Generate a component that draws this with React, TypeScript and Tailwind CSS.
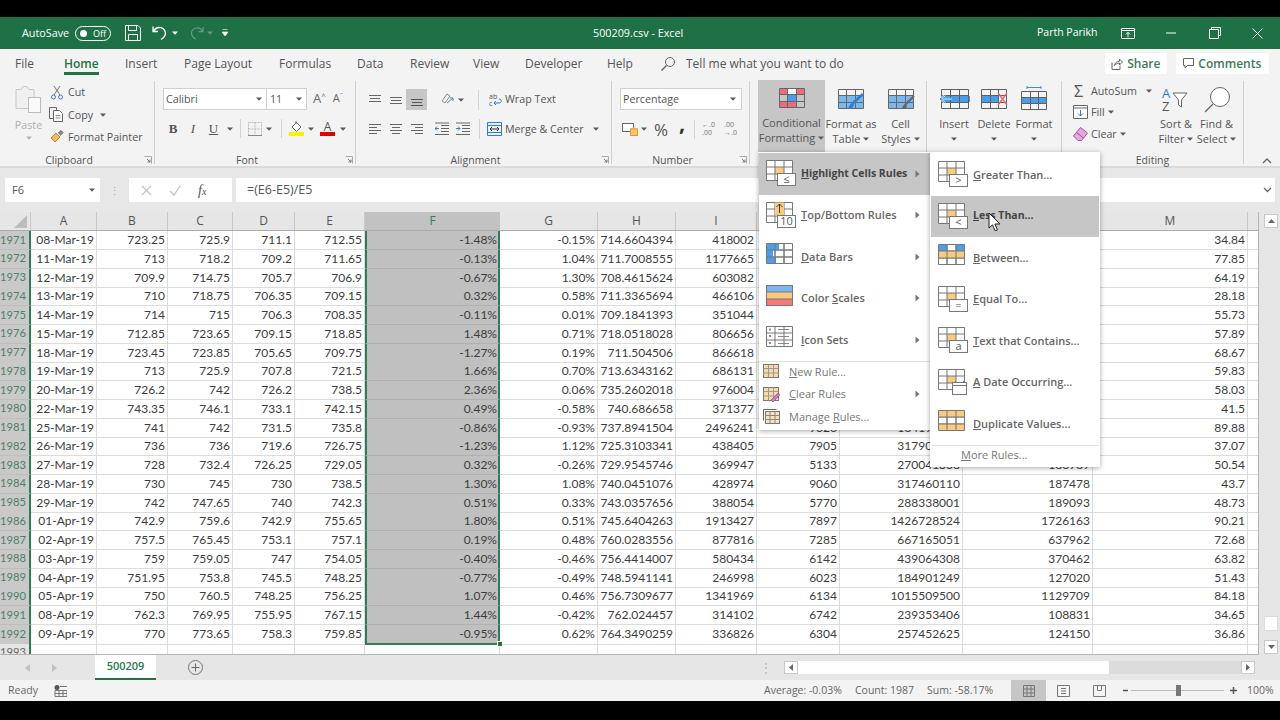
import React from 'react';

const rows: string[][] = [
  ['1971', '08-Mar-19', '723.25', '725.9', '711.1', '712.55', '-1.48%', '-0.15%', '714.6604394', '418002', '', '', '', '34.84'],
  ['1972', '11-Mar-19', '713', '718.2', '709.2', '711.65', '-0.13%', '1.04%', '711.7008555', '1177665', '', '', '', '77.85'],
  ['1973', '12-Mar-19', '709.9', '714.75', '705.7', '706.9', '-0.67%', '1.30%', '708.4615624', '603082', '', '', '', '64.19'],
  ['1974', '13-Mar-19', '710', '718.75', '706.35', '709.15', '0.32%', '0.58%', '711.3365694', '466106', '', '', '', '28.18'],
  ['1975', '14-Mar-19', '714', '715', '706.3', '708.35', '-0.11%', '0.01%', '709.1841393', '351044', '', '', '', '55.73'],
  ['1976', '15-Mar-19', '712.85', '723.65', '709.15', '718.85', '1.48%', '0.71%', '718.0518028', '806656', '', '', '', '57.89'],
  ['1977', '18-Mar-19', '723.45', '723.85', '705.65', '709.75', '-1.27%', '0.19%', '711.504506', '866618', '', '', '', '68.67'],
  ['1978', '19-Mar-19', '713', '725.9', '707.8', '721.5', '1.66%', '0.70%', '713.6343162', '686131', '', '', '', '59.83'],
  ['1979', '20-Mar-19', '726.2', '742', '726.2', '738.5', '2.36%', '0.06%', '735.2602018', '976004', '', '', '', '58.03'],
  ['1980', '22-Mar-19', '743.35', '746.1', '733.1', '742.15', '0.49%', '-0.58%', '740.686658', '371377', '', '', '', '41.5'],
  ['1981', '25-Mar-19', '741', '742', '731.5', '735.8', '-0.86%', '-0.93%', '737.8941504', '2496241', '9026', '184194500', '', '89.88'],
  ['1982', '26-Mar-19', '736', '736', '719.6', '726.75', '-1.23%', '1.12%', '725.3103341', '438405', '7905', '317900000', '', '37.07'],
  ['1983', '27-Mar-19', '728', '732.4', '726.25', '729.05', '0.32%', '-0.26%', '729.9545746', '369947', '5133', '270041308', '186989', '50.54'],
  ['1984', '28-Mar-19', '730', '745', '730', '738.5', '1.30%', '1.08%', '740.0451076', '428974', '9060', '317460110', '187478', '43.7'],
  ['1985', '29-Mar-19', '742', '747.65', '740', '742.3', '0.51%', '0.33%', '743.0357656', '388054', '5770', '288338001', '189093', '48.73'],
  ['1986', '01-Apr-19', '742.9', '759.6', '742.9', '755.65', '1.80%', '0.51%', '745.6404263', '1913427', '7897', '1426728524', '1726163', '90.21'],
  ['1987', '02-Apr-19', '757.5', '765.45', '753.1', '757.1', '0.19%', '0.48%', '760.0283556', '877816', '7285', '667165051', '637962', '72.68'],
  ['1988', '03-Apr-19', '759', '759.05', '747', '754.05', '-0.40%', '-0.46%', '756.4414007', '580434', '6142', '439064308', '370462', '63.82'],
  ['1989', '04-Apr-19', '751.95', '753.8', '745.5', '748.25', '-0.77%', '-0.49%', '748.5941141', '246998', '6023', '184901249', '127020', '51.43'],
  ['1990', '05-Apr-19', '750', '760.5', '748.25', '756.25', '1.07%', '0.46%', '756.7309677', '1341969', '6134', '1015509500', '1129709', '84.18'],
  ['1991', '08-Apr-19', '762.3', '769.95', '755.95', '767.15', '1.44%', '-0.42%', '762.024457', '314102', '6742', '239353406', '108831', '34.65'],
  ['1992', '09-Apr-19', '770', '773.65', '758.3', '759.85', '-0.95%', '0.62%', '764.3490259', '336826', '6304', '257452625', '124150', '36.86'],
];

const gridCols = 'grid grid-cols-[31px_66px_71px_65px_62px_70px_135px_98px_78px_81px_83px_123px_130px_155px_11px]';

const Caret = ({ dim }: { dim?: boolean }) => (
  <svg width="6" height="4" viewBox="0 0 6 4" className="shrink-0">
    <path d="M0 0.5h6L3 3.8z" fill={dim ? '#b5b5b5' : '#5a5a5a'} />
  </svg>
);

const Launcher = () => (
  <svg width="8" height="8" viewBox="0 0 8 8" className="absolute right-[2px] top-[-1px]">
    <path d="M0.5 0.5h7v7" fill="none" stroke="#aaa" />
    <path d="M3 3l3 3M6 3.5V6H3.5" fill="none" stroke="#777" />
  </svg>
);

const Lines = ({ lines, active }: { lines: number[][]; active?: boolean }) => (
  <svg width="14" height="14" viewBox="0 0 14 14">
    {lines.map((l, i) => (
      <path key={i} d={`M${l[0]} ${l[2]}.5H${l[1]}`} stroke={active ? '#555' : '#666'} strokeWidth="1" />
    ))}
  </svg>
);

// little grid used by ribbon buttons
const BigTable = ({ children, w = 28, h = 24 }: { children?: React.ReactNode; w?: number; h?: number }) => (
  <svg width={w} height={h} viewBox="0 0 28 24" className="overflow-visible">
    {children}
  </svg>
);

const TableLines = ({ y = 2 }: { y?: number }) => (
  <path
    d={`M1.5 ${y + 0.5}h25v19h-25zM1.5 ${y + 6.5}h25M1.5 ${y + 13.5}h25M9.5 ${y + 0.5}v19M18.5 ${y + 0.5}v19`}
    fill="none"
    stroke="#666"
  />
);

const RuleTable = ({ children, fill = true }: { children?: React.ReactNode; fill?: boolean }) => (
  <svg width="31" height="27" viewBox="0 0 31 27" className="shrink-0">
    <rect x="0.5" y="0.5" width="26" height="20" fill="#fff" />
    {fill && <rect x="9" y="7" width="9" height="7" fill="#f8cb80" />}
    <path d="M0.5 0.5h26v20h-26zM0.5 7h26M0.5 14h26M9 0.5v20M18 0.5v20" fill="none" stroke="#777" />
    {children}
  </svg>
);

const Badge = ({ label }: { label: string }) => (
  <>
    <rect x="11.5" y="13.5" width="18" height="12" fill="#fff" stroke="#777" />
    <text x="20.5" y="23" textAnchor="middle" fontSize="11" fill="#555" fontFamily="Open Sans, sans-serif">
      {label}
    </text>
  </>
);

const Cursor = () => (
  <svg width="13" height="20" viewBox="0 0 13 20" className="absolute left-[988px] top-[212px]">
    <path d="M1 1v15l3.5-3.2 2.6 6 2.4-1-2.6-5.8H12z" fill="#fff" stroke="#222" strokeWidth="1" />
  </svg>
);

const Tab = ({ label, className, active }: { label: string; className: string; active?: boolean }) => (
  <div className={`${className} shrink-0 relative h-full flex items-center pb-[2px] ${active ? 'text-[#1e7145] font-semibold' : ''}`}>
    <span>{label}</span>
    {active && <span className="absolute left-0 w-[35px] bottom-[5px] h-[3px] bg-[#217346]" />}
  </div>
);

const Group = ({ label, className, launcher, children }: { label: string; className: string; launcher?: boolean; children: React.ReactNode }) => (
  <div className={`${className} shrink-0 h-[83px] mt-px border-r border-[#cfcfcf] flex flex-col`}>
    <div className="flex-1 min-h-0">{children}</div>
    <div className={`relative h-[8px] top-[1px] flex items-center justify-center text-[10.5px] text-[#555] ${launcher ? 'pr-[16px]' : ''}`}>
      <span>{label}</span>
      {launcher && <Launcher />}
    </div>
  </div>
);

const BigBtn = ({ icon, l1, l2, className, active }: { icon: React.ReactNode; l1: string; l2?: string; className: string; active?: boolean }) => (
  <div className={`${className} shrink-0 flex flex-col items-center text-[11px] leading-[15px] text-[#555] ${active ? 'bg-[#c6c6c6] h-[72px] -mt-px relative z-0' : 'h-[70px]'}`}>
    <div className="h-[35px] pt-[6px] flex justify-center">{icon}</div>
    <div className="whitespace-nowrap">{l1}</div>
    <div className="h-[15px] whitespace-nowrap flex items-center gap-[3px]">
      {l2 && <span>{l2}</span>}
      <Caret />
    </div>
  </div>
);

const Vsep = ({ className }: { className: string }) => <div className={`${className} shrink-0 w-px bg-[#d4d4d4]`} />;

const MenuRow = ({
  icon, pre = '', u, post, arrow, active, small, bold, className,
}: {
  icon: React.ReactNode; pre?: string; u: string; post: string; arrow?: boolean; active?: boolean; small?: boolean; bold?: boolean; className?: string;
}) => (
  <div className={`flex items-center ${small ? 'h-[22.5px]' : 'h-[41.5px]'} ${active ? 'bg-[#c6c6c6]' : ''} ${className ?? ''}`}>
    {icon}
    <span className={`whitespace-nowrap ${bold ? 'font-bold text-[#444] text-[10.5px]' : small ? 'font-normal text-[#777] text-[11px]' : 'font-semibold text-[#666] text-[11px]'}`}>
      {pre}
      <u>{u}</u>
      {post}
    </span>
    {arrow && (
      <svg width="5" height="8" viewBox="0 0 5 8" className="absolute left-[156px]">
        <path d="M0.5 0.5L4.5 4 0.5 7.5z" fill="#777" />
      </svg>
    )}
  </div>
);

const IconSlot = ({ children }: { children: React.ReactNode }) => <div className="w-[42px] pl-[7px] flex items-center">{children}</div>;

const MiniSheet = ({ children }: { children?: React.ReactNode }) => (
  <svg width="17" height="15" viewBox="0 0 17 15" className="shrink-0">
    <rect x="0.5" y="0.5" width="15" height="13" fill="#fbd9a0" stroke="#777" />
    <path d="M0.5 4.5h15M0.5 9h15M5.5 0.5v13M10.5 0.5v13" stroke="#999" fill="none" />
    {children}
  </svg>
);

const App: React.FC = () => {
  return (
    <div className="relative w-[1280px] h-[720px] bg-black overflow-hidden font-['Open_Sans',sans-serif] text-[#555] flex flex-col">
      <div className="h-[17px] shrink-0 bg-black" />

      {/* title bar */}
      <div className="h-[32px] shrink-0 bg-[#1e7145] text-white text-[10.8px] flex items-center">
        <span className="ml-[22px] w-[53px]">AutoSave</span>
        <div className="w-[36px] h-[15px] rounded-full border border-white flex items-center justify-between pl-[4px] pr-[4px]">
          <span className="w-[7px] h-[7px] rounded-full bg-white" />
          <span className="text-[9px] leading-none">Off</span>
        </div>
        <svg width="16" height="16" viewBox="0 0 16 16" className="ml-[14px]">
          <path d="M0.5 0.5h12.5l2.5 2.5v12.5H0.5zM3.5 0.5v5h8v-5M3.5 15.5v-6h9v6" fill="none" stroke="#fff" />
        </svg>
        <svg width="16" height="16" viewBox="0 0 16 16" className="ml-[11px]">
          <path d="M1 1.5v5h5M1.3 6.5C3 3.5 6 2 9 2.7c3.5 1 5.2 4.4 4 7.5-.7 2-2.3 3.4-4 4.3" fill="none" stroke="#fff" strokeWidth="1.3" />
        </svg>
        <svg width="6" height="4" viewBox="0 0 6 4" className="ml-[4px]"><path d="M0 0.5h6L3 3.8z" fill="#fff" /></svg>
        <svg width="15" height="16" viewBox="0 0 16 16" className="ml-[11px] opacity-30">
          <path d="M15 1.5v5h-5M14.7 6.5C13 3.5 10 2 7 2.7c-3.5 1-5.2 4.4-4 7.5.7 2 2.3 3.4 4 4.3" fill="none" stroke="#fff" strokeWidth="1.3" />
        </svg>
        <svg width="6" height="4" viewBox="0 0 6 4" className="ml-[3px] opacity-30"><path d="M0 0.5h6L3 3.8z" fill="#fff" /></svg>
        <svg width="6" height="8" viewBox="0 0 6 8" className="ml-[9px]"><path d="M0.5 0.5h5M0 3h6L3 7z" fill="#fff" stroke="#fff" strokeWidth="0.6" /></svg>
        <span className="ml-[365px] w-[444px] whitespace-nowrap">500209.csv - Excel</span>
        <span className="whitespace-nowrap w-[84px] text-[10.5px]">Parth Parikh</span>
        <svg width="14" height="11" viewBox="0 0 14 11">
          <path d="M0.5 0.5h13v10h-13zM0.5 2.5h13M7 9V4.5M5 6.3l2-2 2 2" fill="none" stroke="#fff" />
        </svg>
        <svg width="14" height="2" viewBox="0 0 14 2" className="ml-[29px]"><path d="M2 1h10" stroke="#fff" /></svg>
        <svg width="12" height="12" viewBox="0 0 12 12" className="ml-[31px]"><path d="M2.5 2.5v-2h9v8h-2M0.5 2.5h9v9h-9z" fill="none" stroke="#fff" /></svg>
        <svg width="11" height="11" viewBox="0 0 11 11" className="ml-[31px]"><path d="M0.5 0.5l10 10M10.5 0.5l-10 10" stroke="#fff" /></svg>
      </div>

      {/* tabs */}
      <div className="h-[31px] shrink-0 bg-[#f3f3f3] text-[12px] flex items-center pl-[15px] text-[#555]">
        <Tab label="File" className="w-[49px]" />
        <Tab label="Home" className="w-[61px]" active />
        <Tab label="Insert" className="w-[59px]" />
        <Tab label="Page Layout" className="w-[95px]" />
        <Tab label="Formulas" className="w-[78px]" />
        <Tab label="Data" className="w-[53px]" />
        <Tab label="Review" className="w-[63px]" />
        <Tab label="View" className="w-[52px]" />
        <Tab label="Developer" className="w-[82px]" />
        <Tab label="Help" className="w-[53px]" />
        <svg width="16" height="16" viewBox="0 0 16 16" className="shrink-0 mb-[2px]">
          <circle cx="10" cy="6" r="4.5" fill="none" stroke="#666" />
          <path d="M6.5 9.5L1.5 14.5" stroke="#666" strokeWidth="1.4" />
        </svg>
        <span className="ml-[10px] mb-[2px] whitespace-nowrap">Tell me what you want to do</span>
        <div className="ml-[261px] mb-[2px] w-[62px] h-[21px] bg-white flex items-center justify-center gap-[4px] font-semibold text-[#3d7a5b]">
          <svg width="12" height="12" viewBox="0 0 12 12">
            <path d="M1 4.5v7h8v-4M3.5 7.5c.4-2.5 2.5-4.3 5-4.3V1l3 3-3 3V5c-2 0-3.500 1-5 2.500z" fill="none" stroke="#666" />
          </svg>
          Share
        </div>
        <div className="ml-[9px] mb-[2px] w-[93px] h-[21px] bg-white flex items-center justify-center gap-[4px] font-semibold text-[#3d7a5b]">
          <svg width="11" height="11" viewBox="0 0 11 11">
            <path d="M0.5 0.5h10v7h-6l-2.500 2.500V7.500h-1.500z" fill="none" stroke="#666" />
          </svg>
          Comments
        </div>
      </div>

      {/* ribbon */}
      <div className="h-[88px] shrink-0 bg-[#f3f3f3] border-b-2 border-[#dadada] flex items-start text-[10.7px] text-[#555] relative">
        <Group label="Clipboard" className="w-[155px]" launcher>
          <div className="flex">
            <div className="w-[49px] flex flex-col items-center pl-[8px] pt-[4px] text-[#b0b0b0]">
              <svg width="28" height="28" viewBox="0 0 28 28">
                <path d="M1 4.500h5l2-3h4l2 3h5v19H1z" fill="#f0f0f0" stroke="#c8c8c8" />
                <rect x="13.500" y="12.500" width="12" height="15" fill="#fafafa" stroke="#bbb" />
              </svg>
              <span className="mt-[5px] leading-[15px]">Paste</span>
              <span className="mt-[3px]"><Caret dim /></span>
            </div>
            <div className="flex flex-col">
              <div className="h-[22.500px] flex items-center">
                <svg width="12" height="15" viewBox="0 0 12 15" className="ml-[2px] mr-[5px]">
                  <path d="M3 1l6 9M9 1L3 10" stroke="#777" />
                  <circle cx="2.500" cy="12" r="2" fill="none" stroke="#3b79c4" />
                  <circle cx="9.500" cy="12" r="2" fill="none" stroke="#3b79c4" />
                </svg>
                Cut
              </div>
              <div className="h-[22.500px] flex items-center">
                <svg width="15" height="15" viewBox="0 0 15 15" className="mr-[4px]">
                  <path d="M0.500 0.500h7v11h-7z" fill="none" stroke="#666" />
                  <path d="M4.500 3.500h6l3 3v8h-9z" fill="#fff" stroke="#666" />
                  <path d="M6.500 8.500h5M6.500 11h5" stroke="#888" />
                </svg>
                Copy
                <span className="ml-[7px]"><Caret /></span>
              </div>
              <div className="h-[22.500px] flex items-center whitespace-nowrap">
                <svg width="15" height="15" viewBox="0 0 15 15" className="mr-[4px]">
                  <path d="M2 8l5-5 4 4-5 5z" fill="#f3b769" stroke="#c98530" />
                  <path d="M9 3l3-2.500 2 2L11.500 5.500" fill="#888" stroke="#777" />
                </svg>
                Format Painter
              </div>
            </div>
          </div>
        </Group>

        <Group label="Font" className="w-[201px]" launcher>
          <div className="flex pl-[8px] pt-[7px] h-[30px]">
            <div className="w-[104px] h-[22px] bg-white border border-[#d0d0d0] flex items-center justify-between pl-[2px] pr-[4px]">
              Calibri <Caret />
            </div>
            <div className="w-[40px] h-[22px] bg-white border border-l-0 border-[#d0d0d0] flex items-center justify-between pl-[3px] pr-[4px]">
              11 <Caret />
            </div>
            <div className="ml-[6px] h-[21px] flex items-center text-[13px] gap-[7px] text-[#666]">
              <span>A<sup className="text-[8px]">^</sup></span>
              <span className="text-[11px]">A<sup className="text-[8px] text-[#4a86c8]">ˇ</sup></span>
            </div>
          </div>
          <div className="flex items-center pl-[8px] pt-[4px] h-[31px] text-[13px]">
            <span className="w-[20px] font-bold font-['Liberation_Serif',serif] text-center">B</span>
            <span className="w-[20px] italic font-['Liberation_Serif',serif] text-center">I</span>
            <span className="w-[21px] underline font-['Liberation_Serif',serif] text-center">U</span>
            <span className="ml-[3px]"><Caret /></span>
            <Vsep className="h-[19px] ml-[7px]" />
            <svg width="14" height="14" viewBox="0 0 14 14" className="ml-[7px]">
              <path d="M0.500 0.500h13v13h-13zM0.500 7h13M7 0.500v13" fill="none" stroke="#bbb" strokeDasharray="2 1" />
              <path d="M0 13.500h14" stroke="#888" />
            </svg>
            <span className="ml-[4px]"><Caret /></span>
            <Vsep className="h-[19px] ml-[9px]" />
            <div className="ml-[7px] w-[15px] flex flex-col items-center">
              <svg width="13" height="11" viewBox="0 0 13 11">
                <path d="M2 6l4.500-4.500L11 6 6.500 10.500z" fill="#fff" stroke="#666" />
                <path d="M6 0v3" stroke="#666" />
              </svg>
              <span className="w-[15px] h-[4px] bg-[#ffef00]" />
            </div>
            <span className="ml-[4px]"><Caret /></span>
            <div className="ml-[6px] w-[15px] flex flex-col items-center leading-[11px] text-[12px] text-[#555]">
              A
              <span className="w-[15px] h-[4px] bg-[#e00000]" />
            </div>
            <span className="ml-[5px]"><Caret /></span>
          </div>
        </Group>

        <Group label="Alignment" className="w-[256px]" launcher>
          <div className="flex items-center pl-[8px] pt-[7px] h-[30px]">
            <span className="w-[21px] flex justify-center"><Lines lines={[[1, 13, 2], [2, 12, 5], [1, 13, 8]]} /></span>
            <span className="w-[21px] flex justify-center"><Lines lines={[[1, 13, 4], [2, 12, 7], [1, 13, 10]]} /></span>
            <span className="w-[21px] h-[21px] bg-[#c6c6c6] flex justify-center items-center"><Lines active lines={[[1, 13, 6], [2, 12, 9], [1, 13, 12]]} /></span>
            <svg width="16" height="15" viewBox="0 0 16 15" className="ml-[12px]">
              <path d="M3 9l5-7 3 2-5 7z" fill="none" stroke="#888" />
              <path d="M8 11l6-5M14 6l-3 0M14 6v3" stroke="#4a86c8" fill="none" />
            </svg>
            <span className="ml-[3px]"><Caret /></span>
            <Vsep className="h-[20px] ml-[14px]" />
            <svg width="16" height="15" viewBox="0 0 16 15" className="ml-[9px]">
              <text x="1" y="6.500" fontSize="7" fill="#555" fontFamily="Open Sans, sans-serif">ab</text>
              <text x="1" y="14" fontSize="7" fill="#555" fontFamily="Open Sans, sans-serif">c</text>
              <path d="M6 11h5c3 0 3-4 0-4" fill="none" stroke="#3b79c4" />
              <path d="M8 9l-2 2 2 2" fill="none" stroke="#3b79c4" />
            </svg>
            <span className="ml-[1px] whitespace-nowrap">Wrap Text</span>
          </div>
          <div className="flex items-center pl-[8px] pt-[5px] h-[31px]">
            <span className="w-[21px] flex justify-center"><Lines lines={[[1, 13, 2], [1, 9, 5], [1, 13, 8], [1, 9, 11]]} /></span>
            <span className="w-[21px] flex justify-center"><Lines lines={[[1, 13, 2], [3, 11, 5], [1, 13, 8], [3, 11, 11]]} /></span>
            <span className="w-[21px] flex justify-center"><Lines lines={[[1, 13, 2], [5, 13, 5], [1, 13, 8], [5, 13, 11]]} /></span>
            <svg width="14" height="14" viewBox="0 0 14 14" className="ml-[8px]">
              <path d="M6 3.500h8M6 6.500h8M6 9.500h8M0 1h14M0 12.500h14" stroke="#666" />
              <path d="M4 6.500H0M2 4.500l-2 2 2 2" stroke="#3b79c4" fill="none" />
            </svg>
            <svg width="14" height="14" viewBox="0 0 14 14" className="ml-[7px]">
              <path d="M6 3.500h8M6 6.500h8M6 9.500h8M0 1h14M0 12.500h14" stroke="#666" />
              <path d="M0 6.500h4M2 4.500l2 2-2 2" stroke="#3b79c4" fill="none" />
            </svg>
            <Vsep className="h-[20px] ml-[9px]" />
            <svg width="15" height="14" viewBox="0 0 15 14" className="ml-[7px]">
              <path d="M0.500 0.500h14v13h-14zM0.500 3.500h14M0.500 10.500h14" fill="#e6f0fa" stroke="#3b79c4" />
              <path d="M3 7h9M5 5l-2 2 2 2M10 5l2 2-2 2" fill="none" stroke="#333" />
            </svg>
            <span className="ml-[3px] whitespace-nowrap">Merge &amp; Center</span>
            <span className="ml-[9px]"><Caret /></span>
          </div>
        </Group>

        <Group label="Number" className="w-[138px]" launcher>
          <div className="pl-[8px] pt-[7px] h-[30px]">
            <div className="w-[122px] h-[22px] bg-white border border-[#d0d0d0] flex items-center justify-between pl-[2px] pr-[5px]">
              Percentage <Caret />
            </div>
          </div>
          <div className="flex items-center pl-[10px] pt-[5px] h-[31px]">
            <svg width="16" height="14" viewBox="0 0 16 14">
              <rect x="0.500" y="1.500" width="11" height="8" fill="#fff" stroke="#666" />
              <ellipse cx="12" cy="7" rx="3.500" ry="1.500" fill="#f6c674" />
              <rect x="8.500" y="7" width="7" height="6.500" fill="#f6c674" stroke="#d99b3a" />
            </svg>
            <span className="ml-[3px]"><Caret /></span>
            <span className="ml-[7px] text-[17px] leading-none text-[#555]">%</span>
            <span className="ml-[11px] w-[6px] text-[22px] font-bold leading-none text-[#333] -mt-[14px]">,</span>
            <Vsep className="h-[19px] ml-[9px]" />
            <div className="ml-[7px] w-[14px] text-[7px] leading-[8px] text-[#777] whitespace-nowrap"><span className="text-[#3b79c4]">←</span>.0<br />.00</div>
            <div className="ml-[8px] w-[14px] text-[7px] leading-[8px] text-[#777] whitespace-nowrap">.00<br /><span className="text-[#3b79c4]">→</span>.0</div>
          </div>
        </Group>

        <Group label="" className="w-[177px]">
          <div className="flex pl-[8px]">
            <BigBtn
              className="w-[67px]"
              active
              l1="Conditional"
              l2="Formatting"
              icon={(
                <BigTable>
                  <rect x="2" y="3" width="8" height="6" fill="#ef6b7b" />
                  <rect x="18" y="3" width="9" height="6" fill="#ef6b7b" />
                  <rect x="2" y="15" width="16" height="6" fill="#ef6b7b" />
                  <rect x="10" y="9" width="8" height="6" fill="#4a9ee8" />
                  <rect x="10" y="3" width="8" height="6" fill="#fff" />
                  <TableLines />
                </BigTable>
              )}
            />
            <BigBtn
              className="w-[52px]"
              l1="Format as"
              l2="Table"
              icon={(
                <BigTable>
                  <rect x="2" y="9" width="24" height="12" fill="#7cb6ee" />
                  <TableLines />
                  <path d="M26 7L15 17" stroke="#2f7fd1" strokeWidth="2.500" />
                  <path d="M15 16c-2 1-3 3-4 6 3 0 5-1 6-4z" fill="#2f7fd1" />
                </BigTable>
              )}
            />
            <BigBtn
              className="w-[47px]"
              l1="Cell"
              l2="Styles"
              icon={(
                <BigTable>
                  <rect x="2" y="9" width="24" height="12" fill="#7cb6ee" />
                  <TableLines />
                  <path d="M27 9L18 18" stroke="#666" strokeWidth="2" />
                  <path d="M18 17c-2 1-3 3-3 5 3 0 5-1 5-3z" fill="#666" />
                </BigTable>
              )}
            />
          </div>
        </Group>

        <Group label="" className="w-[135px]">
          <div className="flex pl-[7px]">
            <BigBtn
              className="w-[40px]"
              l1="Insert"
              icon={(
                <BigTable>
                  <rect x="2" y="9" width="28" height="6" fill="#4a9ee8" />
                  <path d="M1.500 2.500h27v19h-27zM1.500 8.500h27M1.500 15.500h27M10.500 2.500v19M19.500 2.500v19" fill="none" stroke="#5f5f5f" />
                  <path d="M0 12h12M5 8l-5 4 5 4" fill="none" stroke="#fff" strokeWidth="2" />
                  <path d="M0 12h12M5 8l-5 4 5 4" fill="none" stroke="#2f7fd1" />
                </BigTable>
              )}
            />
            <BigBtn
              className="w-[40px]"
              l1="Delete"
              icon={(
                <BigTable>
                  <rect x="2" y="9" width="16" height="6" fill="#4a9ee8" />
                  <path d="M1.500 2.500h25v19h-25zM1.500 8.500h25M1.500 15.500h25M10.500 2.500v19M18.500 2.500v19" fill="none" stroke="#5f5f5f" />
                  <path d="M18 6l9 12M27 6l-9 12" stroke="#e8606f" strokeWidth="1.300" />
                </BigTable>
              )}
            />
            <BigBtn
              className="w-[40px]"
              l1="Format"
              icon={(
                <BigTable>
                  <rect x="2" y="10" width="24" height="6" fill="#4a9ee8" />
                  <path d="M1.500 4.500h25v18h-25zM1.500 10.500h25M1.500 16.500h25M10.500 4.500v18M18.500 4.500v18" fill="none" stroke="#5f5f5f" />
                  <path d="M7 0.500h14M7 -1v3M21 -1v3" stroke="#4a86c8" fill="none" />
                </BigTable>
              )}
            />
          </div>
        </Group>

        <Group label="Editing" className="w-[182px]">
          <div className="flex">
            <div className="w-[95px] pl-[12px] -mt-[1px] flex flex-col">
              <div className="h-[21.500px] flex items-center">
                <span className="w-[17px] text-[16px] leading-none text-[#555]">Σ</span>
                AutoSum
                <span className="ml-[9px]"><Caret /></span>
              </div>
              <div className="h-[21.500px] flex items-center">
                <svg width="15" height="14" viewBox="0 0 15 14" className="-ml-[1px] mr-[3px]">
                  <path d="M0.500 0.500h14v13h-14zM0.500 3h14" fill="#fff" stroke="#666" />
                  <path d="M7.500 5v6M5 8.500l2.500 2.500L10 8.500" fill="none" stroke="#2f7fd1" />
                </svg>
                Fill
                <span className="ml-[3px]"><Caret /></span>
              </div>
              <div className="h-[21.500px] flex items-center">
                <svg width="15" height="14" viewBox="0 0 15 14" className="-ml-[1px] mr-[3px]">
                  <path d="M0.500 9l7-8.500 7 5.500-6 7.500H5z" fill="#e6a8e0" stroke="#a64ca6" />
                  <path d="M3.500 5.500l7 5.500" stroke="#a64ca6" />
                </svg>
                Clear
                <span className="ml-[3px]"><Caret /></span>
              </div>
            </div>
            <BigBtn
              className="w-[38px]"
              l1="Sort &"
              l2="Filter"
              icon={(
                <svg width="30" height="26" viewBox="0 0 30 26" className="-mt-px">
                  <text x="1" y="12" fontSize="13" fill="#2f7fd1" fontFamily="Open Sans, sans-serif">A</text>
                  <text x="1" y="25" fontSize="13" fill="#555" fontFamily="Open Sans, sans-serif">Z</text>
                  <path d="M12 7h14l-5.500 7v7l-3-2v-5z" fill="#fff" stroke="#666" />
                </svg>
              )}
            />
            <BigBtn
              className="w-[37px] ml-[3px]"
              l1="Find &"
              l2="Select"
              icon={(
                <svg width="28" height="28" viewBox="0 0 28 28" className="-mt-px">
                  <circle cx="17" cy="11" r="9.500" fill="#fff" stroke="#666" />
                  <path d="M10 18L2 26" stroke="#666" strokeWidth="1.200" />
                </svg>
              )}
            />
          </div>
        </Group>

        <svg width="10" height="6" viewBox="0 0 10 6" className="ml-[18px] mt-[78px]">
          <path d="M1 5l4-4 4 4" fill="none" stroke="#666" strokeWidth="1.300" />
        </svg>
      </div>

      {/* formula bar */}
      <div className="h-[44px] shrink-0 bg-[#e7e7e7] flex items-center pl-[5px] pr-[5px] text-[11px] text-[#555]">
        <div className="w-[95px] h-[24px] bg-white flex items-center justify-between pl-[7px] pr-[5px]">
          F6 <Caret />
        </div>
        <span className="w-[29px] text-center text-[#aaa] leading-none tracking-tight">⋮</span>
        <div className="w-[103px] h-[24px] bg-white flex items-center pl-[12px]">
          <svg width="11" height="11" viewBox="0 0 11 11"><path d="M1 1l9 9M10 1l-9 9" stroke="#c4c4c4" strokeWidth="1.300" /></svg>
          <svg width="12" height="11" viewBox="0 0 12 11" className="ml-[17px]"><path d="M1 6l4 4 6-9" fill="none" stroke="#c4c4c4" strokeWidth="1.300" /></svg>
          <span className="ml-[17px] italic font-['Liberation_Serif',serif] text-[14px] text-[#555]">f<span className="text-[10px]">x</span></span>
        </div>
        <div className="ml-[4px] flex-1 h-[24px] bg-white flex items-center justify-between pl-[11px] pr-[3px]">
          <span className="text-[12.5px]">=(E6-E5)/E5</span>
          <svg width="9" height="6" viewBox="0 0 9 6"><path d="M1 1l3.500 3.500L8 1" fill="none" stroke="#666" strokeWidth="1.300" /></svg>
        </div>
      </div>

      {/* sheet area */}
      <div className="h-[443px] shrink-0 flex bg-[#e6e6e6] font-['Lato',sans-serif] text-[12px] text-[#3c3c3c] whitespace-nowrap">
        <div className="w-[1259px] shrink-0 border-r border-[#b5b5b5] border-b overflow-hidden relative">
          <div className={`${gridCols} h-[19px] text-[12px] text-[#555] font-['Open_Sans',sans-serif] border-b border-[#adadad]`}>
            <div className="border-r border-[#c8c8c8] flex items-end justify-end pr-[3px] pb-[2px]">
              <svg width="13" height="13" viewBox="0 0 13 13"><path d="M13 0v13H0z" fill="#bdbdbd" /></svg>
            </div>
            {['A', 'B', 'C', 'D', 'E'].map(c => (
              <div key={c} className="border-r border-[#c8c8c8] flex items-center justify-center">{c}</div>
            ))}
            <div className="bg-[#c2c2c2] flex items-center justify-center text-[#3d7a5b]">F</div>
            {['G', 'H', 'I', 'J', 'K', 'L', 'M'].map(c => (
              <div key={c} className="border-r border-[#c8c8c8] flex items-center justify-center">{c}</div>
            ))}
            <div />
          </div>
          <div className="bg-white h-[423px] overflow-hidden">
            {rows.map((r, ri) => (
              <div key={r[0]} className={`${gridCols} h-[18.76px]`}>
                <div className="bg-[#c9c9c9] border-r-2 border-[#2f7d55] border-b border-b-[#bdbdbd] flex items-center justify-end pr-[3px] text-[11.2px] text-[#4f8068]">
                  {r[0]}
                </div>
                {r.slice(1).map((v, i) => (
                  <div
                    key={i}
                    className={
                      i === 5
                        ? `bg-[#c0c0c0] border-x-2 border-x-[#2f7d55] ${ri === rows.length - 1 ? 'border-b-2 border-b-[#2f7d55]' : 'border-b border-b-[#b0b0b0]'} flex items-center justify-end pr-[1px]`
                        : 'border-r border-b border-[#dcdcdc] flex items-center justify-end pr-[2px]'
                    }
                  >
                    {v}
                  </div>
                ))}
                <div className="border-b border-[#dcdcdc]" />
              </div>
            ))}
            <div className={`${gridCols} h-[18.76px]`}>
              <div className="bg-[#e6e6e6] border-r-2 border-[#2f7d55] flex items-center justify-end pr-[3px] text-[11.2px] text-[#666]">1993</div>
              {['a', 'b', 'c', 'd', 'e', 'f', 'g', 'h', 'i', 'j', 'k', 'l', 'm'].map(k => (
                <div key={k} className="border-r border-[#dcdcdc]" />
              ))}
            </div>
          </div>
          <div className="absolute left-[497px] top-[429px] w-[6px] h-[6px] bg-[#217346] border border-white" />
        </div>
        <div className="flex-1 flex flex-col items-center pt-[2px] pb-[1px] pl-[3px]">
          <div className="w-[14px] h-[14px] bg-white border border-[#c8c8c8] flex items-center justify-center">
            <svg width="7" height="4" viewBox="0 0 7 4"><path d="M0 4h7L3.500 0z" fill="#666" /></svg>
          </div>
          <div className="flex-1 min-h-0 flex flex-col justify-end">
            <div className="w-[14px] h-[15px] bg-white border border-[#dcdcdc] mb-[9px]" />
          </div>
          <div className="w-[14px] h-[14px] bg-white border border-[#c8c8c8] flex items-center justify-center">
            <svg width="7" height="4" viewBox="0 0 7 4"><path d="M0 0h7L3.500 4z" fill="#666" /></svg>
          </div>
        </div>
      </div>

      {/* sheet tabs */}
      <div className="h-[25px] shrink-0 bg-[#e6e6e6] flex items-center">
        <svg width="5" height="8" viewBox="0 0 5 8" className="ml-[25px]"><path d="M5 0v8L0 4z" fill="#c0c0c0" /></svg>
        <svg width="5" height="8" viewBox="0 0 5 8" className="ml-[22px]"><path d="M0 0v8l5-4z" fill="#c0c0c0" /></svg>
        <div className="ml-[38px] w-[61px] h-[25px] bg-white border-b-2 border-[#217346] flex items-center justify-center text-[11px] font-semibold text-[#2a7a50]">
          500209
        </div>
        <div className="ml-[32px] w-[15px] h-[15px] rounded-full border border-[#777] flex items-center justify-center">
          <svg width="9" height="9" viewBox="0 0 9 9"><path d="M4.500 0.500v8M0.500 4.500h8" stroke="#666" /></svg>
        </div>
        <span className="ml-[557px] text-[#bbb] leading-none text-[12px]">⋮</span>
        <div className="ml-[12px] w-[14px] h-[13px] bg-white border border-[#c8c8c8] flex items-center justify-center">
          <svg width="4" height="7" viewBox="0 0 4 7"><path d="M4 0v7L0 3.500z" fill="#666" /></svg>
        </div>
        <div className="w-[311px] h-[13px] bg-white" />
        <div className="w-[132px] h-[13px] bg-[#dcdcdc]" />
        <div className="w-[14px] h-[13px] bg-white border border-[#c8c8c8] flex items-center justify-center">
          <svg width="4" height="7" viewBox="0 0 4 7"><path d="M0 0v7l4-3.500z" fill="#666" /></svg>
        </div>
      </div>

      {/* status bar */}
      <div className="h-[21px] shrink-0 bg-[#f3f3f3] flex items-center text-[10.500px] text-[#666]">
        <span className="ml-[8px] w-[46px]">Ready</span>
        <svg width="13" height="12" viewBox="0 0 13 12">
          <circle cx="3" cy="2.500" r="2.500" fill="#555" />
          <path d="M6 1.500h7M1 5.500h12v6H1zM1 8.500h12M5 5.500v6M9 5.500v6" fill="none" stroke="#777" />
        </svg>
        <span className="ml-[697px] w-[91px] whitespace-nowrap">Average: -0.03%</span>
        <span className="w-[72px] whitespace-nowrap">Count: 1987</span>
        <span className="w-[84px] whitespace-nowrap">Sum: -58.17%</span>
        <div className="w-[35px] h-[21px] bg-[#c6c6c6] flex items-center justify-center">
          <svg width="12" height="12" viewBox="0 0 12 12"><path d="M0.500 0.500h11v11h-11zM0.500 4h11M0.500 8h11M4 0.500v11M8 0.500v11" fill="none" stroke="#777" /></svg>
        </div>
        <svg width="13" height="12" viewBox="0 0 13 12" className="ml-[11px]"><path d="M0.500 0.500h12v11h-12zM4 3.500h5M4 6h5M4 8.500h5" fill="none" stroke="#777" /></svg>
        <svg width="13" height="12" viewBox="0 0 13 12" className="ml-[23px]"><path d="M0.500 0.500h12v11h-12zM4.500 0.500v5h4v-5" fill="none" stroke="#777" /></svg>
        <svg width="7" height="3" viewBox="0 0 7 3" className="ml-[16px]"><path d="M1 1.500h5" stroke="#555" strokeWidth="1.500" /></svg>
        <div className="ml-[2px] w-[93px] h-px bg-[#bbb] relative">
          <span className="absolute left-[45px] -top-[5px] w-[5px] h-[11px] bg-[#777]" />
        </div>
        <svg width="7" height="7" viewBox="0 0 7 7" className="ml-[6px]"><path d="M3.500 0v7M0 3.500h7" stroke="#555" strokeWidth="1.500" /></svg>
        <span className="ml-[10px]">100%</span>
      </div>

      <div className="flex-1 bg-black" />

      {/* conditional formatting menu */}
      <div className="absolute left-[759px] top-[152px] w-[171px] h-[278px] bg-white shadow-[0_1px_5px_rgba(0,0,0,0.35)] pt-px">
        <div className="relative">
          <MenuRow
            active
            bold
            u="H"
            post="ighlight Cells Rules"
            arrow
            icon={<IconSlot><RuleTable><Badge label="≤" /></RuleTable></IconSlot>}
          />
          <MenuRow
            u="T"
            post="op/Bottom Rules"
            arrow
            icon={(
              <IconSlot>
                <RuleTable fill={false}>
                  <rect x="9" y="0.500" width="9" height="13" fill="#f8cb80" />
                  <path d="M13.500 11V2M10.500 5l3-3 3 3" fill="none" stroke="#444" />
                  <Badge label="10" />
                </RuleTable>
              </IconSlot>
            )}
          />
          <MenuRow
            u="D"
            post="ata Bars"
            arrow
            icon={(
              <IconSlot>
                <RuleTable fill={false}>
                  <rect x="1" y="1" width="12" height="6" fill="#4f9fe6" />
                  <rect x="1" y="7" width="6" height="7" fill="#4f9fe6" />
                  <rect x="1" y="14" width="9" height="6" fill="#4f9fe6" />
                  <path d="M0.500 7h26M0.500 14h26M9 0.500v20M18 0.500v20" stroke="#777" />
                </RuleTable>
              </IconSlot>
            )}
          />
          <MenuRow
            pre="Color "
            u="S"
            post="cales"
            arrow
            icon={(
              <IconSlot>
                <RuleTable fill={false}>
                  <rect x="1" y="1" width="25" height="6" fill="#7cb6ee" />
                  <rect x="1" y="7" width="25" height="7" fill="#f8cb80" />
                  <rect x="1" y="14" width="25" height="6" fill="#f57b7b" />
                  <path d="M0.500 7h26M0.500 14h26M0.500 0.500h26v20h-26z" fill="none" stroke="#777" />
                </RuleTable>
              </IconSlot>
            )}
          />
          <MenuRow
            u="I"
            post="con Sets"
            arrow
            icon={(
              <IconSlot>
                <RuleTable fill={false}>
                  <rect x="3" y="2.500" width="2" height="2" fill="#4f9fe6" />
                  <rect x="3" y="9" width="2" height="2" fill="#e05c5c" />
                  <rect x="3" y="16" width="2" height="2" fill="#4f9fe6" />
                  <path d="M12 3.500h11M12 10.500h11M12 17.500h11" stroke="#888" />
                </RuleTable>
              </IconSlot>
            )}
          />
          <div className="h-px bg-[#e2e2e2] -mb-px" />
          <MenuRow
            small
            u="N"
            post="ew Rule..."
            icon={<div className="w-[30px] pl-[4px] flex items-center"><MiniSheet /></div>}
          />
          <MenuRow
            small
            u="C"
            post="lear Rules"
            arrow
            icon={(
              <div className="w-[30px] pl-[4px] flex items-center">
                <MiniSheet>
                  <path d="M8 13l7-7 2 2-7 7z" fill="#c77bc7" stroke="#a64ca6" strokeWidth="0.700" />
                </MiniSheet>
              </div>
            )}
          />
          <MenuRow
            small
            pre="Manage "
            u="R"
            post="ules..."
            icon={(
              <div className="w-[30px] pl-[4px] flex items-center">
                <svg width="17" height="15" viewBox="0 0 17 15">
                  <path d="M0.500 0.500h13M0.500 0.500v11" stroke="#666" fill="none" />
                  <rect x="2.500" y="2.500" width="14" height="12" fill="#fbe3b8" stroke="#777" />
                  <path d="M2.500 6.500h14M2.500 10.500h14M7 2.500v12M12 2.500v12" stroke="#888" />
                </svg>
              </div>
            )}
          />
        </div>
      </div>

      {/* highlight cells submenu */}
      <div className="absolute left-[930px] top-[152px] w-[170px] h-[315px] bg-white shadow-[0_1px_5px_rgba(0,0,0,0.35)] pt-[2px] px-px">
        <MenuRow u="G" post="reater Than..." icon={<IconSlot><RuleTable><Badge label=">" /></RuleTable></IconSlot>} />
        <MenuRow active bold u="L" post="ess Than..." icon={<IconSlot><RuleTable><Badge label="<" /></RuleTable></IconSlot>} />
        <MenuRow
          u="B"
          post="etween..."
          icon={(
            <IconSlot>
              <RuleTable>
                <rect x="1" y="1" width="8" height="6" fill="#4f9fe6" />
                <rect x="18" y="1" width="8" height="6" fill="#4f9fe6" />
                <rect x="1" y="7" width="25" height="7" fill="#f8cb80" />
                <path d="M0.500 7h26M0.500 14h26M9 0.500v20M18 0.500v20" stroke="#777" />
              </RuleTable>
            </IconSlot>
          )}
        />
        <MenuRow u="E" post="qual To..." icon={<IconSlot><RuleTable><Badge label="=" /></RuleTable></IconSlot>} />
        <MenuRow u="T" post="ext that Contains..." icon={<IconSlot><RuleTable><Badge label="a" /></RuleTable></IconSlot>} />
        <MenuRow
          u="A"
          post=" Date Occurring..."
          icon={(
            <IconSlot>
              <RuleTable>
                <rect x="14.500" y="13.500" width="14" height="12" fill="#fff" stroke="#777" />
                <path d="M14.500 16.500h14M17.500 12v2M25.500 12v2" stroke="#777" />
              </RuleTable>
            </IconSlot>
          )}
        />
        <MenuRow
          u="D"
          post="uplicate Values..."
          icon={(
            <IconSlot>
              <RuleTable fill={false}>
                <rect x="1" y="1" width="25" height="6" fill="#f8cb80" />
                <rect x="1" y="14" width="25" height="6" fill="#f8cb80" />
                <path d="M0.500 7h26M0.500 14h26M9 0.500v20M18 0.500v20" stroke="#777" />
              </RuleTable>
            </IconSlot>
          )}
        />
        <div className="h-px bg-[#e2e2e2]" />
        <MenuRow small u="M" post="ore Rules..." className="pl-[30px] -mt-[2px]" icon={null} />
      </div>

      <Cursor />
    </div>
  );
};

export default App;
